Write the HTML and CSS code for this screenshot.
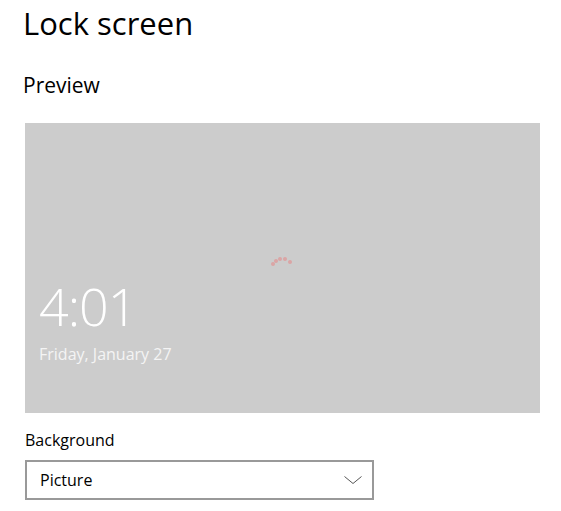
FILE: index.html
```html
<!DOCTYPE html>
<html lang="en">

<head>
    <meta charset="UTF-8">
    <meta name="viewport" content="width=device-width, initial-scale=1.0">
    <title>Lock screen</title>
    <link rel="stylesheet" href="styles.css">
</head>

<body>
    <div class="page">
        <h1 class="title">Lock screen</h1>
        <h2 class="subtitle">Preview</h2>

        <!-- lock screen preview -->
        <div class="preview">
            <div class="spinner">
                <span class="dot d1"></span>
                <span class="dot d2"></span>
                <span class="dot d3"></span>
                <span class="dot d4"></span>
                <span class="dot d5"></span>
            </div>
            <div class="clock">
                <div class="time">4:01</div>
                <div class="date">Friday, January 27</div>
            </div>
        </div>

        <!-- background picker -->
        <div class="field">
            <label class="label">Background</label>
            <div class="select">
                <span class="value">Picture</span>
                <svg class="chevron" width="18" height="8" viewBox="0 0 18 8">
                    <path d="M0.5 0.5 L9 7.5 L17.5 0.5" fill="none" stroke="#555" stroke-width="1" />
                </svg>
            </div>
        </div>
    </div>
</body>

</html>
```

FILE: styles.css
```css
body {
    margin: 0;
    padding: 0;
    background: #fff;
    font-family: "Open Sans", "Noto Sans", sans-serif;
    color: #000;
}

.page {
    padding: 0 0 0 23px;
}

.title {
    margin: 0;
    padding-top: 2px;
    font-size: 31px;
    font-weight: 400;
    line-height: 42px;
}

.subtitle {
    margin: 27px 0 0 0;
    font-size: 21px;
    font-weight: 400;
    line-height: 28px;
}

.preview {
    position: relative;
    margin: 24px 0 0 2px;
    width: 515px;
    height: 290px;
    background: #cccccc;
    display: flex;
    flex-direction: column;
    justify-content: flex-end;
}

.spinner {
    position: absolute;
    left: 246px;
    top: 134px;
    width: 24px;
    height: 10px;
}

.dot {
    position: absolute;
    width: 4px;
    height: 4px;
    border-radius: 50%;
    background: #dba5a5;
}

.d1 { left: 0; top: 5px; }
.d2 { left: 3px; top: 2px; }
.d3 { left: 7px; top: 0; }
.d4 { left: 12px; top: 0; }
.d5 { left: 17px; top: 3px; }

.clock {
    padding: 0 0 48px 14px;
    color: #fff;
}

.time {
    font-size: 52px;
    font-weight: 300;
    line-height: 56px;
    letter-spacing: -1px;
}

.date {
    font-size: 16px;
    line-height: 22px;
    margin-top: 9px;
    color: #f4f4f4;
}

.field {
    margin: 16px 0 0 2px;
}

.label {
    display: block;
    font-size: 16px;
    line-height: 22px;
}

.select {
    box-sizing: border-box;
    margin-top: 9px;
    width: 349px;
    height: 40px;
    border: 2px solid #999;
    display: flex;
    align-items: center;
    justify-content: space-between;
    padding: 0 10px 0 13px;
}

.value {
    font-size: 16px;
}

.chevron {
    display: block;
}
```
